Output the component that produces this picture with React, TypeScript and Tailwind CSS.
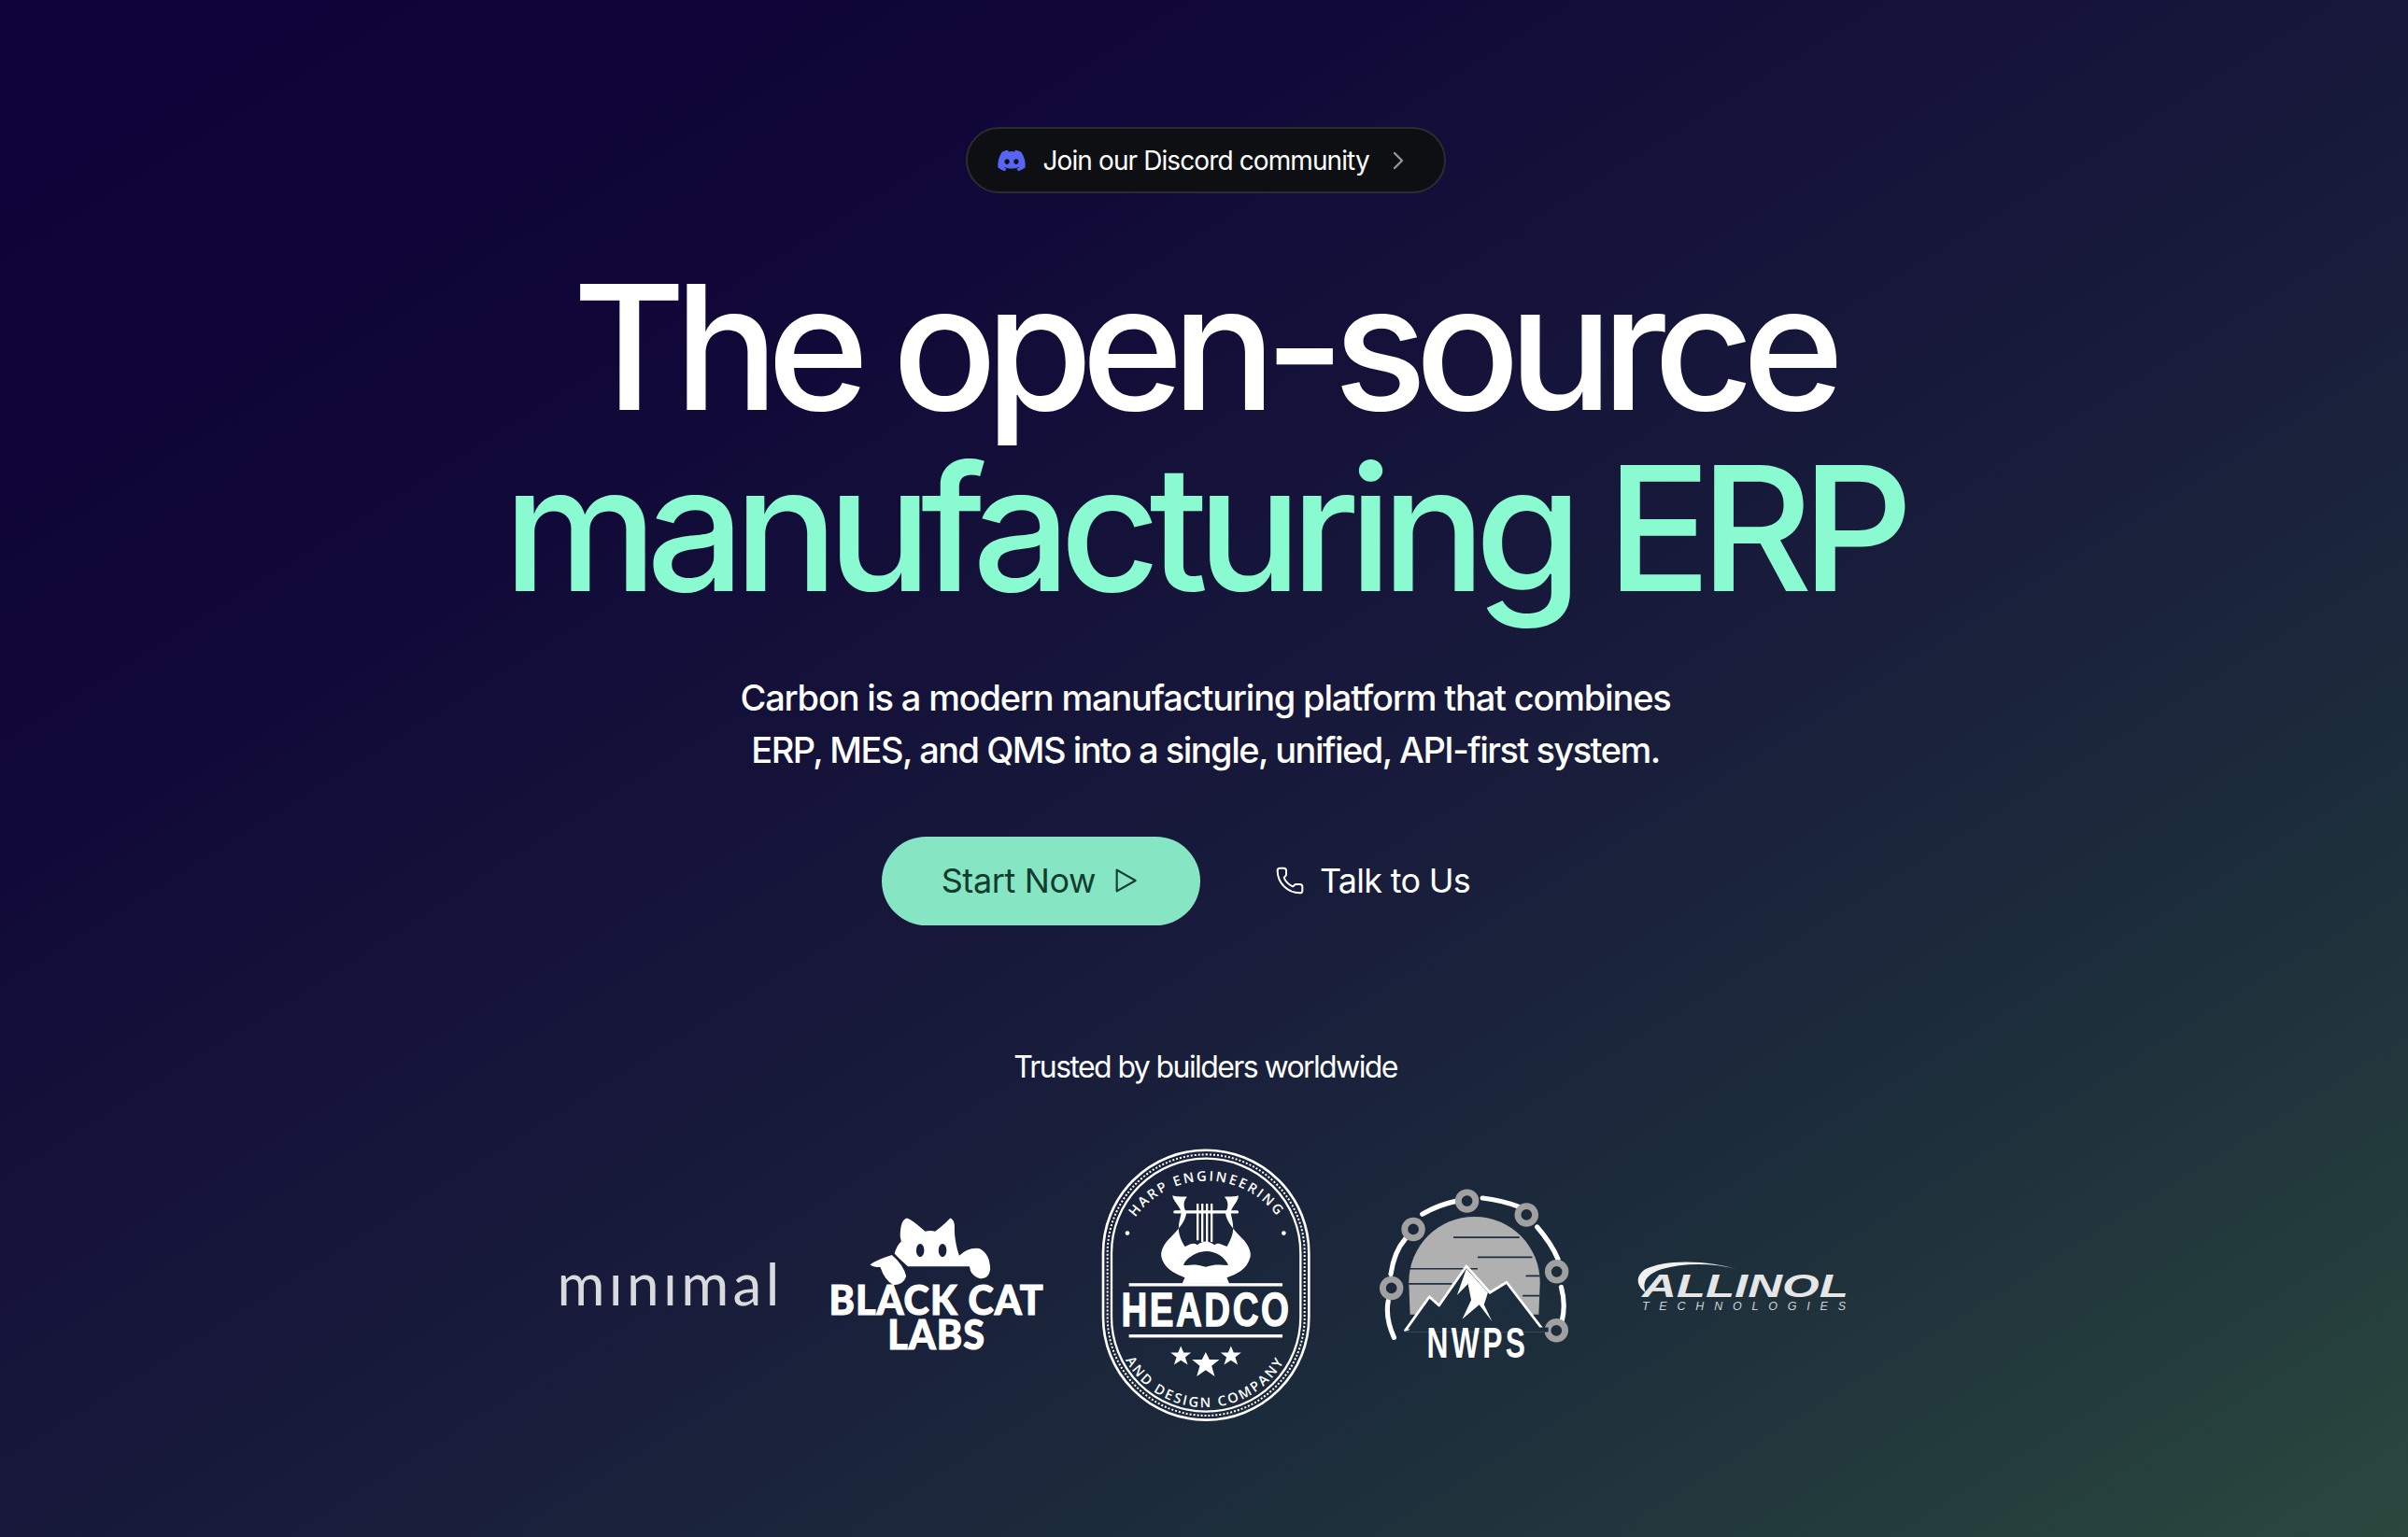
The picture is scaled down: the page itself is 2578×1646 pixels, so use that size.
import { ChevronRight, Phone } from 'lucide-react'
import { FaDiscord } from 'react-icons/fa'

const MinimalLogo = () => (
  <span className="mb-[5px] ml-[6px] font-['Lato',sans-serif] text-[62px] font-normal leading-none tracking-[0.07em] text-[#d9dade]">mınımal</span>
)

const BlackCatLogo = () => (
  <svg viewBox="860 222 650 490" className="w-[232px] h-[175px]">
    <path fill="#fff" d="M1075 320 Q1075 270 1095 265 Q1108 268 1150 305 Q1165 301 1180 305 Q1210 282 1225 265 Q1240 270 1238 300 Q1238 335 1252 378 Q1278 352 1312 356 Q1345 372 1345 420 Q1340 450 1312 446 Q1285 436 1283 410 L1098 410 Q1072 388 1058 372 Q1064 348 1078 335 Z" />
    <ellipse cx="1135" cy="362" rx="12" ry="20" fill="#19203c" />
    <ellipse cx="1202" cy="362" rx="12" ry="20" fill="#19203c" />
    <path fill="#fff" d="M985 405 Q1000 392 1050 376 Q1085 405 1093 440 Q1085 466 1055 466 Q1030 455 1015 412 Q995 414 985 405 Z" />
    <text x="0" y="0" transform="translate(1184 556) scale(0.95 1)" textAnchor="middle" letterSpacing="3" stroke="#fff" strokeWidth="3" className="font-['Lato',sans-serif] font-black" fontSize="122" fill="#fff">BLACK CAT</text>
    <text x="0" y="0" transform="translate(1184 658) scale(0.95 1)" textAnchor="middle" letterSpacing="3" stroke="#fff" strokeWidth="3" className="font-['Lato',sans-serif] font-black" fontSize="122" fill="#fff">LABS</text>
  </svg>
)

const HeadcoLogo = () => (
  <svg viewBox="50 30 685 890" className="w-[228px] h-[297px]">
    <defs>
      <path id="headco-top" d="M150 282 A281 281 0 0 1 640 282" />
      <path id="headco-bottom" d="M118 680 A291 291 0 0 0 662 680" />
    </defs>
    <rect x="62" y="40" width="662" height="868" rx="331" fill="none" stroke="#fff" strokeWidth="8" />
    <rect x="76" y="54" width="634" height="840" rx="317" fill="none" stroke="#fff" strokeWidth="6" strokeDasharray="6 6" />
    <rect x="89" y="67" width="608" height="814" rx="304" fill="none" stroke="#fff" strokeWidth="7" />
    <text fontSize="44" letterSpacing="7" fill="#fff" className="font-['Open_Sans',sans-serif] font-semibold">
      <textPath href="#headco-top" startOffset="50%" textAnchor="middle">HARP ENGINEERING</textPath>
    </text>
    <text fontSize="44" letterSpacing="7" fill="#fff" className="font-['Open_Sans',sans-serif] font-semibold">
      <textPath href="#headco-bottom" startOffset="50%" textAnchor="middle">AND DESIGN COMPANY</textPath>
    </text>
    <circle cx="140" cy="307" r="7" fill="#fff" />
    <circle cx="643" cy="307" r="7" fill="#fff" />
    <path fill="#fff" fillRule="evenodd" d="M285 186 C300 192 320 188 332 190 C318 205 320 225 330 240 C328 270 300 300 275 325 C255 345 245 370 250 385 C260 425 300 440 325 450 L316 470 L468 470 L460 450 C490 440 525 425 535 385 C540 370 530 345 510 325 C485 300 458 270 455 240 C465 225 467 205 452 190 C465 188 485 192 497 186 C498 205 480 215 472 240 C480 280 490 300 460 350 C440 345 435 335 420 345 C400 330 385 330 365 345 C350 335 340 345 325 350 C295 300 305 280 314 240 C305 215 288 205 285 186 Z M320 410 C330 385 365 365 395 365 C425 365 455 385 465 410 C445 412 430 404 392 416 C355 404 340 412 320 410 Z" />
    <rect x="288" y="234" width="210" height="10" rx="5" fill="#fff" />
    <path d="M366 212 V330 M381 212 V335 M396 212 V335 M411 212 V335" stroke="#fff" strokeWidth="7" />
    <rect x="145" y="468" width="494" height="10" fill="#fff" />
    <rect x="145" y="633" width="494" height="10" fill="#fff" />
    <text x="0" y="0" transform="translate(394 607) scale(0.77 1)" textAnchor="middle" letterSpacing="10" fontSize="150" fill="#fff" stroke="#fff" strokeWidth="4" className="font-['Liberation_Sans',sans-serif] font-bold">HEADCO</text>
    <polygon fill="#fff" points="312,670 321,691 345,691 326,706 334,730 312,716 290,730 298,706 279,691 303,691" />
    <polygon fill="#fff" points="392,690 404,714 436,714 411,734 421,768 392,748 363,768 373,734 348,714 380,714" />
    <polygon fill="#fff" points="473,670 482,691 506,691 487,706 495,730 473,716 451,730 459,706 440,691 464,691" />
  </svg>
)

const NwpsLogo = () => {
  const links = [[92, 358], [160, 175], [327, 87], [512, 130], [606, 307], [605, 490]]
  return (
    <svg viewBox="50 46 600 610" className="w-[207px] h-[210px]">
      <path fill="none" stroke="#fff" strokeWidth="15" strokeLinecap="round" d="M100 512 Q72 450 82 398 M90 315 Q100 245 135 205 M188 128 Q235 100 295 87 M375 78 Q435 85 488 105 M545 168 Q590 220 610 268 M620 355 Q635 410 622 462" />
      <path fill="#b0b0b0" d="M146 340 A204 204 0 0 1 554 340 L550 440 L150 440 Z" />
      <path stroke="#1c2d3e" strokeWidth="5" d="M285 200 H490 M360 262 H530 M146 298 H360 M510 320 H554 M146 345 H280 M500 382 H552" />
      {links.map(([cx, cy]) => (
        <circle key={cx + '-' + cy} cx={cx} cy={cy} r="27" fill="none" stroke="#a0a0a0" strokeWidth="20" />
      ))}
      <path fill="#1c2d3e" stroke="#fff" strokeWidth="8" strokeLinejoin="round" d="M135 490 L210 385 L240 412 L325 290 L398 372 L450 340 L565 490 Z" />
      <path fill="#1c2d3e" d="M125 495 H580 V480 L550 480 L480 395 L470 460 L420 400 L405 465 L370 420 L310 460 L320 410 L250 480 L240 430 L205 440 L145 490 Z" />
      <path fill="#fff" d="M325 298 L392 372 L380 410 L405 462 L365 410 L312 455 L340 395 L330 345 L296 380 Z" />
      <text x="0" y="0" transform="translate(360 576) scale(0.7 1)" textAnchor="middle" letterSpacing="14" fontSize="132" fill="#fff" className="font-['Liberation_Sans',sans-serif] font-bold">NWPS</text>
    </svg>
  )
}

const AllinolLogo = () => (
  <svg viewBox="850 270 670 170" className="w-[232px] h-[59px]">
    <path fill="#f1f1f1" d="M1165 306 C1090 280 950 270 880 305 C850 325 850 355 882 378 C868 345 885 320 930 305 C1000 285 1090 285 1165 306 Z" />
    <text x="870" y="390" textLength="638" lengthAdjust="spacingAndGlyphs" fontSize="102" fill="#e6e6e6" className="font-['Liberation_Sans',sans-serif] font-bold italic">ALLINOL</text>
    <text x="870" y="431" textLength="630" lengthAdjust="spacing" fontSize="36" fill="#cfd2d4" className="font-['Liberation_Sans',sans-serif] italic">TECHNOLOGIES</text>
  </svg>
)

export default function App() {
  return (
    <div className="h-[1646px] overflow-hidden bg-[linear-gradient(148deg,#0e0339_0%,#100738_24%,#181b3b_55%,#1c2c3b_74%,#2a483e_100%)] font-['Inter',sans-serif] flex flex-col items-center pt-[136px] pl-[3px] text-white">
      <a className="flex h-[71px] w-[514px] items-center gap-[18px] rounded-full border-2 border-[#2c2c30] bg-[#0e0f13] pl-[31px] text-[28px] tracking-[-0.032em]">
        <FaDiscord className="w-8 h-8 text-[#5865f2]" />
        <span>Join our Discord community</span>
        <ChevronRight className="-ml-[3px] w-8 h-8 text-[#98989c]" strokeWidth={1.75} />
      </a>

      <h1 className="mt-[68px] mr-[6px] text-center text-[186px] leading-[194px] font-medium">
        <span className="block tracking-[-0.067em]">The open-source</span>
        <span className="block tracking-[-0.064em] text-[#8afbd1]">manufacturing ERP</span>
      </h1>

      <p className="mt-[56px] text-center text-[38px] leading-[56px] font-[450]">
        <span className="block tracking-[-0.0315em]">Carbon is a modern manufacturing platform that combines</span>
        <span className="block tracking-[-0.04em]">ERP, MES, and QMS into a single, unified, API-first system.</span>
      </p>

      <div className="mt-[65px] flex items-center gap-[80px]">
        <a className="flex h-[95px] w-[341px] items-center justify-center gap-4 rounded-full bg-[#86e6c4] pb-[2px] text-[36px] text-[#113c2f] tracking-[-0.01em]">
          Start Now
          <svg viewBox="0 0 24 24" className="w-8 h-8" fill="none" stroke="currentColor" strokeWidth="1.6" strokeLinejoin="round">
            <path d="M5 3.5 L20 12 L5 20.5 Z" />
          </svg>
        </a>
        <a className="flex items-center gap-4 pr-[63px] pb-[2px] text-[36px] tracking-[-0.02em]">
          <Phone className="w-8 h-8" strokeWidth={1.5} />
          Talk to Us
        </a>
      </div>

      <p className="mt-[132px] text-[32px] leading-[40px] tracking-[-0.05em]">Trusted by builders worldwide</p>

      <div className="mt-[65px] grid w-[1440px] grid-cols-5 place-items-center">
        <MinimalLogo />
        <BlackCatLogo />
        <HeadcoLogo />
        <NwpsLogo />
        <AllinolLogo />
      </div>
    </div>
  )
}
